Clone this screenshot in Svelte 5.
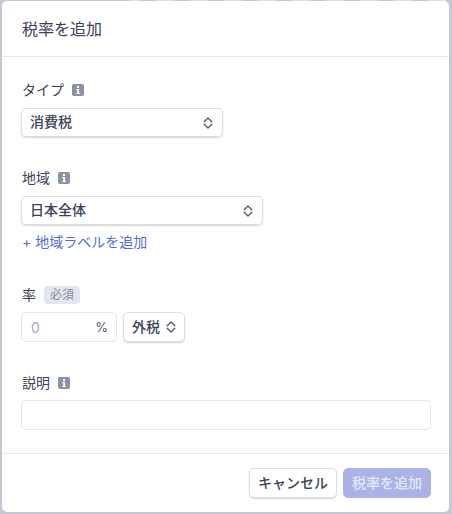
<script>
  const chevrons = 'M2.2 5.8 6 2l3.8 3.8M2.2 8.2 6 12l3.8-3.8';
</script>

{#snippet info()}
  <svg class="info" width="12" height="12" viewBox="0 0 12 12" aria-hidden="true">
    <rect width="12" height="12" rx="2" fill="#8b92a3" />
    <rect x="5" y="2" width="2" height="2" fill="#fff" />
    <path d="M4.2 5h2.9v4h1v1H4.2V9h1V6h-1z" fill="#fff" />
  </svg>
{/snippet}

{#snippet updown()}
  <svg width="12" height="14" viewBox="0 0 12 14" aria-hidden="true">
    <path d={chevrons} fill="none" stroke="#4f566b" stroke-width="1.3" stroke-linecap="round" stroke-linejoin="round" />
  </svg>
{/snippet}

<div class="modal">
  <header>税率を追加</header>

  <div class="body">
    <section class="type-field">
      <div class="label">タイプ {@render info()}</div>
      <button class="select type">
        <span>消費税</span>
        {@render updown()}
      </button>
    </section>

    <section class="region-field">
      <div class="label">地域 {@render info()}</div>
      <button class="select region">
        <span>日本全体</span>
        {@render updown()}
      </button>
      <div class="add-link">+ 地域ラベルを追加</div>
    </section>

    <section class="rate-field">
      <div class="label tight">率 <span class="badge">必須</span></div>
      <div class="rate-row">
        <div class="input rate">
          <span class="placeholder">0</span>
          <span class="pct">%</span>
        </div>
        <button class="select mode">
          <span>外税</span>
          {@render updown()}
        </button>
      </div>
    </section>

    <section>
      <div class="label tight">説明 {@render info()}</div>
      <div class="input full"></div>
    </section>
  </div>

  <footer>
    <button class="btn">キャンセル</button>
    <button class="btn primary">税率を追加</button>
  </footer>
</div>

<style>
  :global(body) {
    background-color: #c6c9d4;
    background-image: repeating-linear-gradient(90deg, #dcdde6 0 10px, #c3c6d4 10px 26px, #dcdde6 26px 34px);
    background-position: 130px 0;
    background-size: 322px 1px;
    background-repeat: no-repeat;
    font-family: "Inter", "Noto Sans CJK JP", sans-serif;
  }

  .modal {
    box-sizing: border-box;
    width: 447px;
    height: 511px;
    margin: 1px 3px 2px 2px;
    display: flex;
    flex-direction: column;
    background: #fff;
    border-radius: 5px;
    color: #3c4257;
  }

  header {
    flex: none;
    height: 56px;
    box-sizing: border-box;
    padding: 0 20px 2px;
    display: flex;
    align-items: center;
    font-size: 16px;
    font-weight: 400;
    border-bottom: 1px solid #e3e8ee;
  }

  .body {
    flex: 1;
    padding: 23px 19px 0;
  }

  .type-field {
    margin-bottom: 31px;
  }
  .region-field {
    margin-bottom: 34px;
  }
  .rate-field {
    margin-bottom: 31px;
  }

  .label {
    height: 20px;
    margin: 0 0 8px 1px;
    display: flex;
    align-items: center;
    gap: 8px;
    font-size: 14px;
    font-weight: 400;
    line-height: 20px;
  }
  .label.tight {
    margin-bottom: 7px;
  }

  .badge {
    height: 18px;
    padding: 0 6px;
    display: flex;
    align-items: center;
    background: #e3e6ee;
    border-radius: 4px;
    color: #858b9c;
    font-size: 12px;
    font-weight: 400;
  }

  button {
    font-family: inherit;
  }

  .select {
    box-sizing: border-box;
    height: 29px;
    padding: 0 8px;
    display: flex;
    align-items: center;
    justify-content: space-between;
    background: #fff;
    border: 1px solid #dcdee4;
    border-radius: 5px;
    box-shadow: 0 1px 1px rgba(0, 0, 0, 0.1), 0 1px 3px rgba(60, 66, 87, 0.08);
    color: #3c4257;
    font-size: 14px;
    font-weight: 500;
  }

  .select span {
    margin-bottom: 3px;
  }

  .type {
    width: 202px;
  }
  .region {
    width: 242px;
  }
  .mode {
    width: 62px;
    height: 30px;
    padding: 0 7px 0 8px;
  }

  .add-link {
    margin: 8px 0 0 1px;
    height: 18px;
    line-height: 18px;
    color: #556cd6;
    font-size: 14px;
    font-weight: 400;
  }

  .rate-row {
    display: flex;
    gap: 6px;
  }

  .input {
    box-sizing: border-box;
    height: 30px;
    background: #fff;
    border: 1px solid #e3e5ea;
    border-radius: 5px;
  }

  .rate {
    width: 96px;
    padding: 0 8px 0 9px;
    display: flex;
    align-items: center;
    justify-content: space-between;
    font-size: 14px;
  }

  .placeholder {
    color: #a3acb9;
  }

  .pct {
    color: #4f566b;
    font-size: 13px;
  }

  .full {
    width: 410px;
  }

  footer {
    flex: none;
    box-sizing: border-box;
    height: 59px;
    padding: 14px 18px 0 0;
    display: flex;
    justify-content: flex-end;
    gap: 6px;
    border-top: 1px solid #e3e8ee;
  }

  .btn {
    box-sizing: border-box;
    width: 88px;
    height: 30px;
    padding: 0 0 3px;
    background: #fff;
    border: 1px solid #dcdee4;
    border-radius: 5px;
    box-shadow: 0 1px 1px rgba(0, 0, 0, 0.1), 0 1px 3px rgba(60, 66, 87, 0.08);
    color: #3c4257;
    font-size: 14px;
    font-weight: 500;
  }

  .primary {
    background: #abb3e6;
    border-color: #abb3e6;
    box-shadow: none;
    color: #e6e9f8;
  }
</style>
